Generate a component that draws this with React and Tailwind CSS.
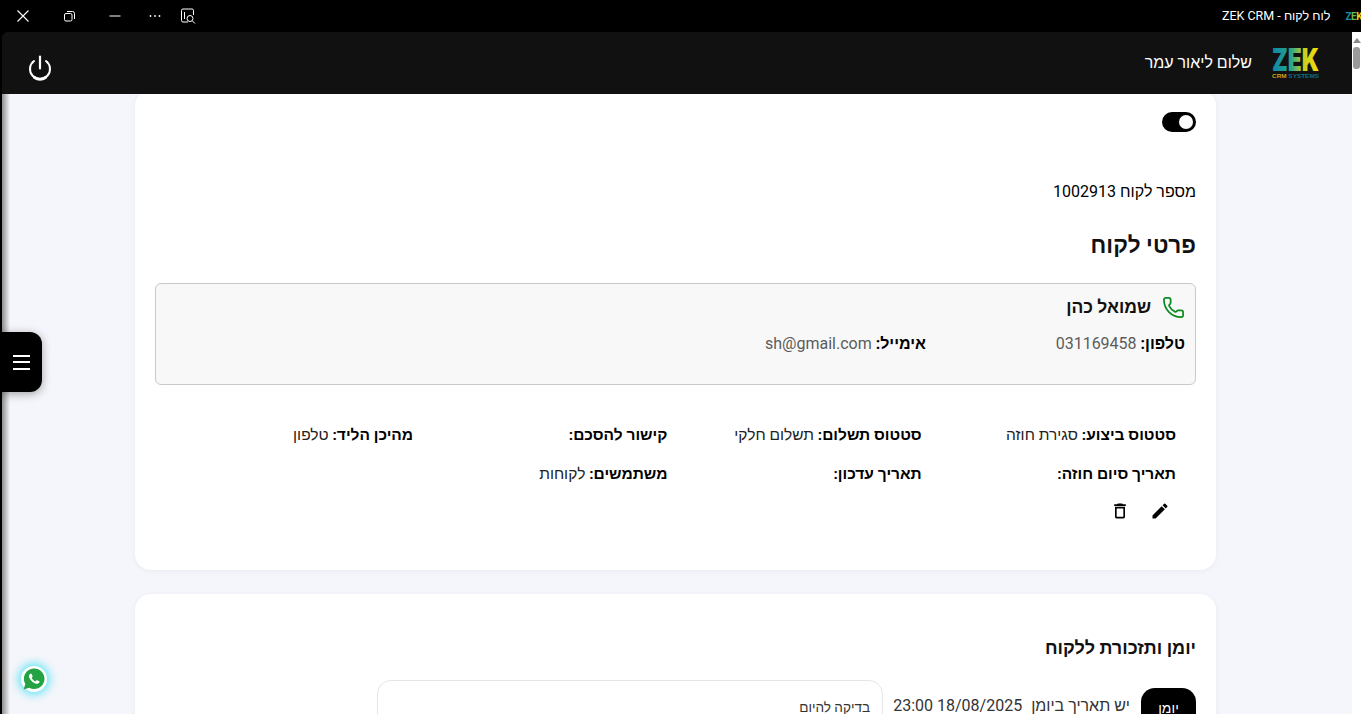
import React from "react";
import { Phone } from "lucide-react";
import { MdEdit, MdOutlineDelete } from "react-icons/md";
import { IoLogoWhatsapp } from "react-icons/io";

const ZekLogo = () => (
  <svg dir="ltr" width="47" height="32" viewBox="0 0 47 32" aria-label="ZEK CRM Systems">
    <defs>
      <linearGradient id="zek" x1="0" x2="1" y1="0" y2="0">
        <stop offset="0" stopColor="#0f86a8" />
        <stop offset="0.4" stopColor="#25a58c" />
        <stop offset="0.68" stopColor="#c8cf20" />
        <stop offset="1" stopColor="#f9dc0a" />
      </linearGradient>
    </defs>
    <text x="0" y="24" direction="ltr" fill="url(#zek)" fontFamily="Inter" fontWeight="900" fontSize="31" textLength="47" lengthAdjust="spacingAndGlyphs">ZEK</text>
    <text x="0" y="31" direction="ltr" fill="#c9a80f" fontFamily="Liberation Sans" fontWeight="700" fontSize="5.5" textLength="47" lengthAdjust="spacingAndGlyphs">CRM <tspan fill="#0f6f8c">SYSTEMS</tspan></text>
  </svg>
);

const WindowIcons = () => (
  <div className="flex items-center" dir="ltr">
    <svg className="ml-[15px] h-4 w-4" viewBox="0 0 16 16" stroke="white" strokeWidth="1.1" fill="none"><path d="M2.500 2.500l11 11M13.500 2.500l-11 11" /></svg>
    <svg className="ml-[30px] h-4 w-4" viewBox="0 0 16 16" stroke="white" strokeWidth="1" fill="none"><rect x="3.500" y="5.500" width="7.500" height="7.500" rx="1.500" /><path d="M6 3.500h5.500a2 2 0 0 1 2 2V11" /></svg>
    <svg className="ml-[30px] h-4 w-4" viewBox="0 0 16 16" stroke="white" strokeWidth="1" fill="none"><path d="M2.500 8h11" /></svg>
    <svg className="ml-[24px] h-4 w-4" viewBox="0 0 16 16" fill="white"><circle cx="3.500" cy="8" r="0.9" /><circle cx="8" cy="8" r="0.9" /><circle cx="12.500" cy="8" r="0.9" /></svg>
    <svg className="ml-[17px] h-4 w-4" viewBox="0 0 16 16" stroke="white" strokeWidth="1" fill="none"><path d="M8 14H3a1.500 1.500 0 0 1-1.500-1.500v-10A1.500 1.500 0 0 1 3 1h9a1.500 1.500 0 0 1 1.500 1.500V7" /><path d="M4.500 4v7" /><circle cx="10" cy="10.500" r="3" /><path d="M12.300 12.800l2.700 2.700" /></svg>
  </div>
);

const Field = ({ label, value, muted, size = "text-[15.5px]" }) => (
  <div className={`${size} leading-[20px]`}>
    <span className="font-bold text-black">{label}:</span>{" "}
    <span className={muted ? "text-[#5b5b5b]" : "text-[#222]"}>{value}</span>
  </div>
);

export default function App() {
  return (
    <div dir="rtl" className="flex h-screen flex-col overflow-hidden bg-black font-['Roboto','Noto_Sans','Liberation_Sans',sans-serif]">
      {/* window chrome */}
      <div className="flex h-8 shrink-0 items-center justify-between overflow-hidden bg-black">
        <div className="flex items-center">
          <span dir="ltr" className="-mr-[1px] text-[10px] font-bold tracking-[-0.5px]">
            <span className="text-[#1b8aa0]">Z</span>
            <span className="text-[#6fb94a]">E</span>
            <span className="text-[#e6d21a]">K</span>
          </span>
          <span className="mr-[15px] text-[12.500px] text-white">לוח לקוח - ZEK CRM</span>
        </div>
        <WindowIcons />
      </div>

      <div className="flex min-h-0 flex-1">
        {/* scrollbar */}
        <div className="flex w-[9px] shrink-0 flex-col items-center bg-white pt-[6px]">
          <div className="h-0 w-0 border-x-[4px] border-b-[5px] border-x-transparent border-b-[#8a8a8a]" />
          <div className="mt-[4px] h-[22px] w-[7px] rounded-[3px] bg-[#9a9a9a]" />
        </div>

        <div className="relative flex min-w-0 flex-1 flex-col">
          <header className="z-10 flex h-[62px] shrink-0 items-center justify-between rounded-tl-[6px] bg-[#111111] pl-[26px] pr-[33px]">
            <div className="flex items-center gap-[20px]">
              <ZekLogo />
              <span className="text-[16px] font-medium text-white">שלום ליאור עמר</span>
            </div>
            <svg className="mt-[9px]" width="24" height="26" viewBox="0 0 24 26" fill="none" stroke="white" strokeLinecap="round">
              <path d="M12 1.500v12" strokeWidth="2.200" />
              <path d="M6 6a10 10 0 1 0 12 0" strokeWidth="2" />
              <path d="M6.500 22.500a10 10 0 0 0 11 0" strokeWidth="3" />
            </svg>
          </header>

          <main className="relative min-h-0 flex-1 bg-[#f5f6fb] pl-[133px] pr-[136px]">
            <section className="-mt-1 rounded-[16px] bg-white px-5 pb-[49px] pt-[22px] shadow-[0_1px_6px_rgba(0,0,0,0.05)]">
              <div className="flex h-5 items-center">
                <span className="flex h-5 w-[34px] items-center justify-start rounded-full bg-black px-[3px]">
                  <span className="h-[14px] w-[14px] rounded-full bg-white" />
                </span>
              </div>
              <p className="mt-[50px] text-[16px] leading-[20px] text-black">מספר לקוח 1002913</p>
              <h1 className="mt-[29px] text-[22.500px] font-bold leading-[28px] text-[#111]">פרטי לקוח</h1>

              <div className="mt-[24px] h-[102px] rounded-[6px] border border-[#c9c9c9] bg-[#f8f8f8] px-[10px] pt-[11px]">
                <div className="flex items-center gap-[11px]">
                  <Phone size={23} strokeWidth={1.8} className="text-[#0b8a1e]" />
                  <span className="text-[17.500px] font-bold leading-[24px] text-[#111]">שמואל כהן</span>
                </div>
                <div className="mt-[15px] flex">
                  <div className="w-[259px]"><Field label="טלפון" value="031169458" muted size="text-[16px]" /></div>
                  <Field label="אימייל" value="sh@gmail.com" muted size="text-[16px]" />
                </div>
              </div>

              <div className="mt-[40px] grid grid-cols-[repeat(4,254.3px)] gap-y-[19px] pr-5">
                <Field label="סטטוס ביצוע" value="סגירת חוזה" />
                <Field label="סטטוס תשלום" value="תשלום חלקי" />
                <Field label="קישור להסכם" value="" />
                <Field label="מהיכן הליד" value="טלפון" />
                <Field label="תאריך סיום חוזה" value="" />
                <Field label="תאריך עדכון" value="" />
                <Field label="משתמשים" value="לקוחות" />
              </div>

              <div className="mt-[17px] flex h-5 items-center gap-[20px] pr-[26px]">
                <MdEdit size={20} className="text-black" />
                <MdOutlineDelete size={20} className="text-black" />
              </div>
            </section>

            <section className="mt-6 rounded-[16px] bg-white px-5 pt-[42px] shadow-[0_1px_6px_rgba(0,0,0,0.05)]">
              <h2 className="text-[18px] font-bold leading-[24px] text-[#111]">יומן ותזכורת ללקוח</h2>
              <div className="mt-[20px] flex items-start">
                <button className="mt-2 flex h-10 w-[55px] shrink-0 items-center justify-center rounded-[14px] bg-black text-[14px] font-medium text-white">יומן</button>
                <span className="mr-[11px] mt-[16px] text-[16px] leading-[20px] text-[#333]">יש תאריך ביומן</span>
                <span className="mr-[9px] mt-[16px] text-[16px] leading-[20px] text-[#333]" dir="ltr">23:00 18/08/2025</span>
                <div className="mr-[10px] h-[80px] w-[506px] rounded-[14px] border border-[#e5e5e5] bg-white px-3 pt-[17px] text-[13.600px] leading-[18px] text-[#333]">בדיקה להיום</div>
              </div>
            </section>

            {/* left edge shade */}
            <div className="pointer-events-none absolute bottom-0 left-0 top-0 w-[8px] bg-gradient-to-r from-[#8f8f8f] to-transparent" />
          </main>
        </div>

        {/* black window edge, holds the floating tab and whatsapp button */}
        <div className="relative z-20 w-[2px] shrink-0 bg-black">
          <button className="absolute right-[-40px] top-[300px] flex h-[60px] w-[42px] items-center justify-center rounded-r-[12px] bg-black pl-[1px] shadow-[0_2px_10px_rgba(0,0,0,0.35)]">
            <span className="flex w-[17px] flex-col gap-[4.500px]">
              <span className="h-[2px] bg-white" />
              <span className="h-[2px] bg-white" />
              <span className="h-[2px] bg-white" />
            </span>
          </button>

          <div className="absolute right-[-45px] top-[634px] flex h-[26px] w-[26px] items-center justify-center rounded-full bg-white shadow-[0_0_8px_3px_rgba(64,224,240,0.75)]">
            <span className="absolute h-[14px] w-[14px] rounded-full bg-white" />
            <IoLogoWhatsapp size={24} className="relative text-[#25a244]" />
          </div>
        </div>
      </div>
    </div>
  );
}
